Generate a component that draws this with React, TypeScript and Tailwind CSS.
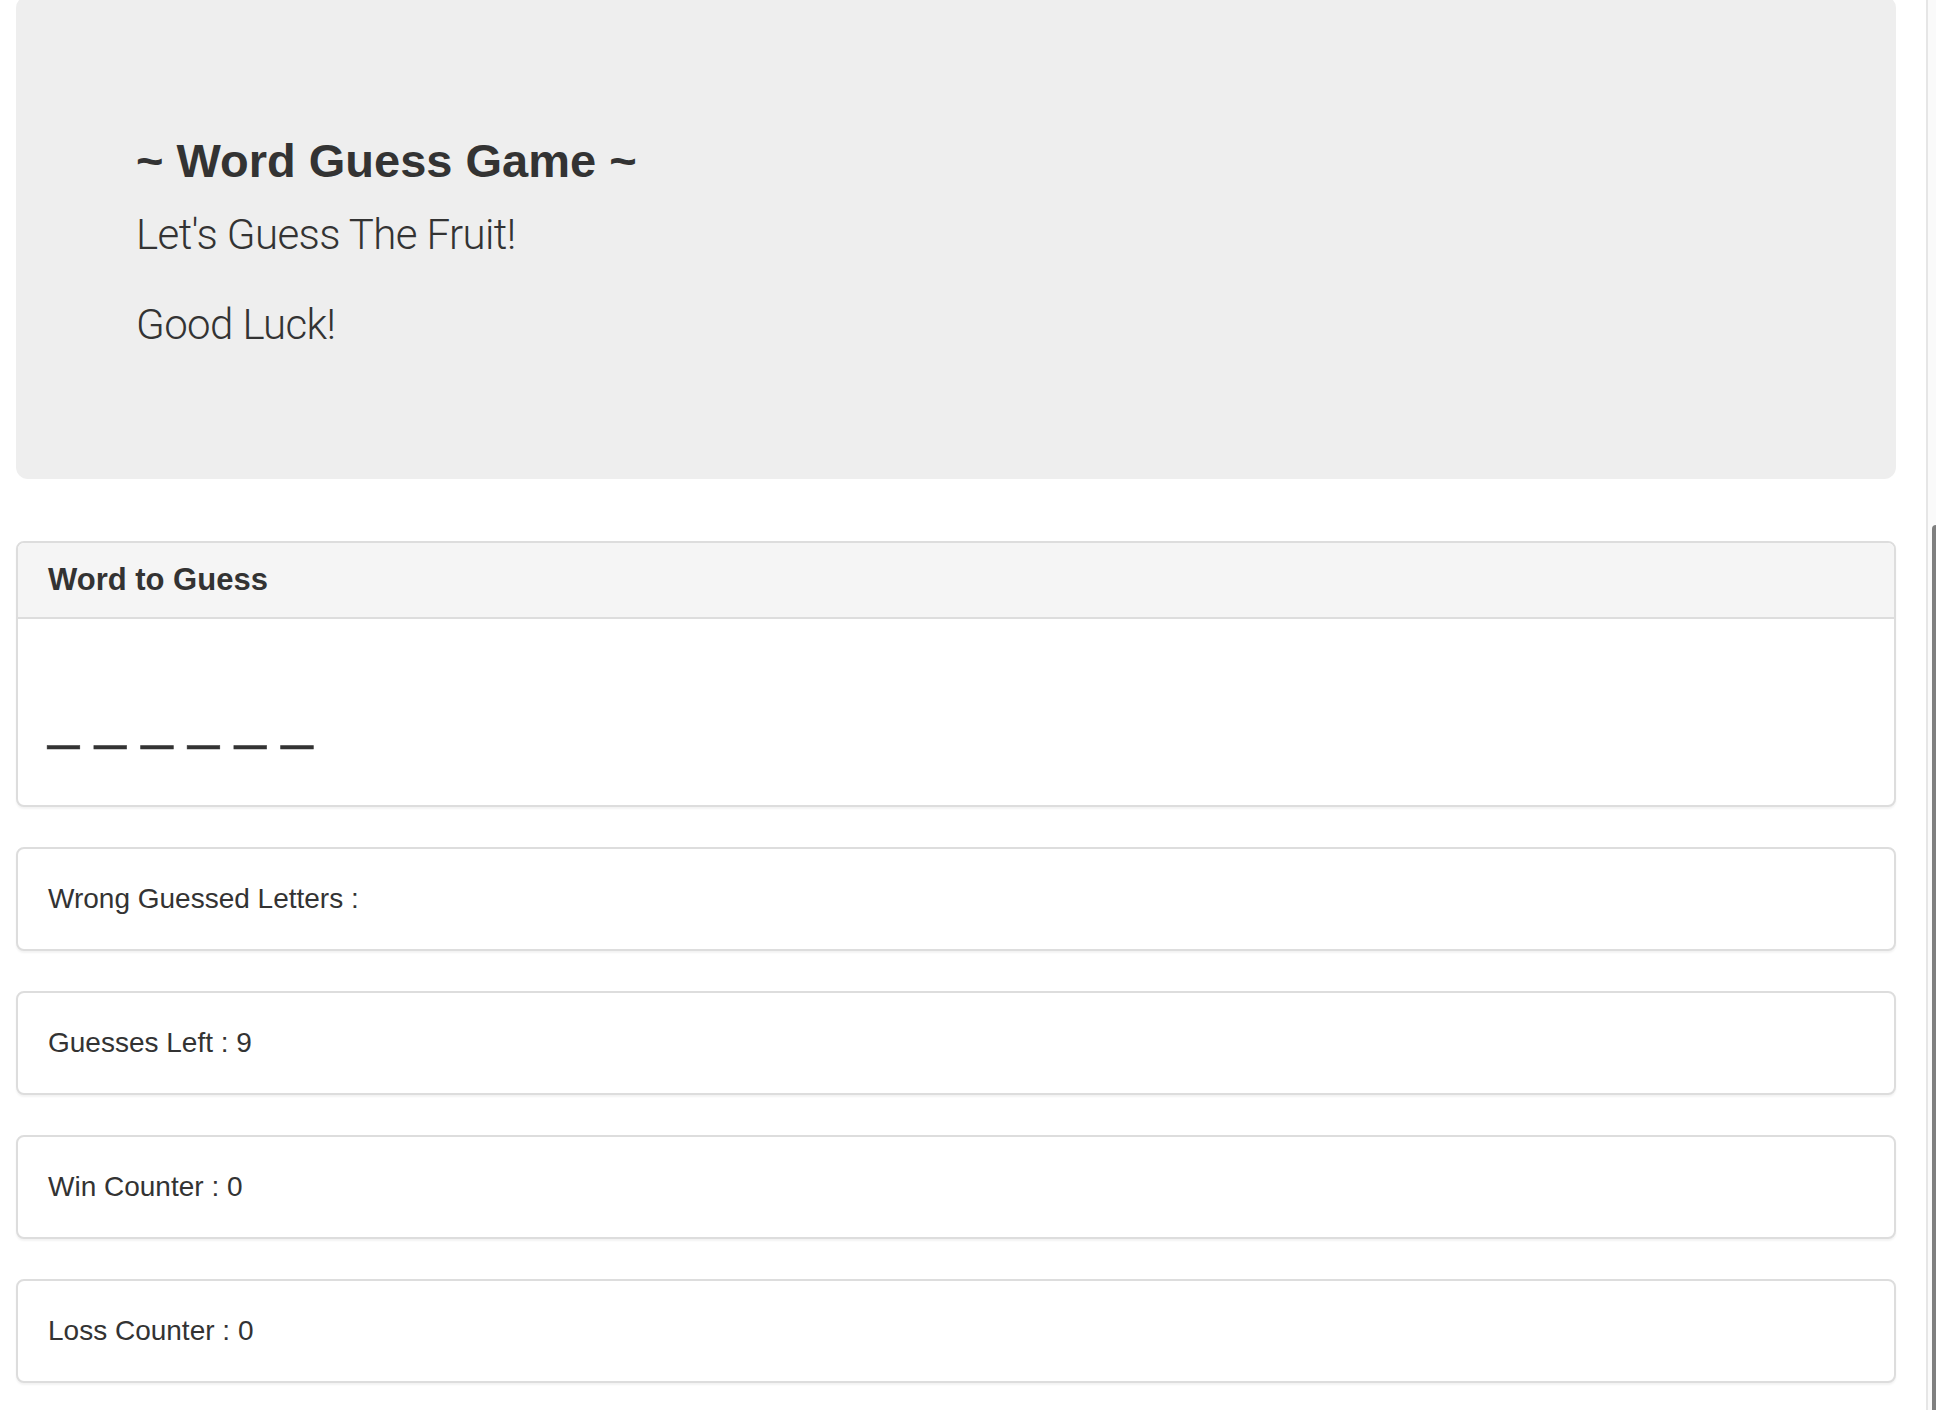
import React from 'react'

const stats = [
  { label: 'Wrong Guessed Letters', value: '' },
  { label: 'Guesses Left', value: '9' },
  { label: 'Win Counter', value: '0' },
  { label: 'Loss Counter', value: '0' },
]

function StatPanel({ label, value }: { label: string; value: string }) {
  return (
    <div className="mt-[40px] bg-white border-2 border-[#dddddd] rounded-[8px] shadow-[0_2px_2px_rgba(0,0,0,0.05)]">
      <div className="px-[30px] py-[30px] text-[28px] leading-[40px] whitespace-pre">
        {label} : {value}
      </div>
    </div>
  )
}

export default function App() {
  const word = ['_', '_', '_', '_', '_', '_']

  return (
    <div
      className="relative h-[1410px] overflow-hidden bg-white text-[#333333]"
      style={{ fontFamily: '"Liberation Sans", Arial, sans-serif' }}
    >
      <div className="pl-[16px] pr-[40px]">
        {/* Jumbotron */}
        <div className="-mt-[4px] bg-[#eeeeee] rounded-[12px] pl-[120px] pr-[120px] pt-[139px] pb-[124px]">
          <h1 className="text-[47px] leading-[51px] font-bold">~ Word Guess Game ~</h1>
          <p
            className="mt-[19px] text-[42px] leading-[60px] font-light tracking-[-0.6px]"
            style={{ fontFamily: 'Roboto, "Liberation Sans", sans-serif' }}
          >
            Let's Guess The Fruit!
          </p>
          <p
            className="mt-[30px] text-[42px] leading-[60px] font-light tracking-[-0.6px]"
            style={{ fontFamily: 'Roboto, "Liberation Sans", sans-serif' }}
          >
            Good Luck!
          </p>
        </div>

        {/* Word panel */}
        <div className="mt-[62px] bg-white border-2 border-[#dddddd] rounded-[8px] shadow-[0_2px_2px_rgba(0,0,0,0.05)] overflow-hidden">
          <div className="bg-[#f5f5f5] border-b-2 border-[#dddddd] px-[30px] py-[20px]">
            <h3 className="text-[31px] leading-[34px] font-bold">Word to Guess</h3>
          </div>
          <div className="px-[30px] py-[30px]">
            <h2 className="mt-[37px] mb-[23px] text-[56px] leading-[66px] [-webkit-text-stroke:0.6px_#333333]">
              {word.join(' ')}
            </h2>
          </div>
        </div>

        {stats.map((s) => (
          <StatPanel key={s.label} label={s.label} value={s.value} />
        ))}
      </div>

      {/* Scrollbar */}
      <div className="absolute top-0 right-0 h-full w-[10px] bg-[#fafafa] border-l-2 border-[#e6e6e6]">
        <div className="absolute right-0 top-[525px] bottom-0 w-[4px] bg-[#7f7f7f] rounded-tl-[4px]" />
      </div>
    </div>
  )
}
